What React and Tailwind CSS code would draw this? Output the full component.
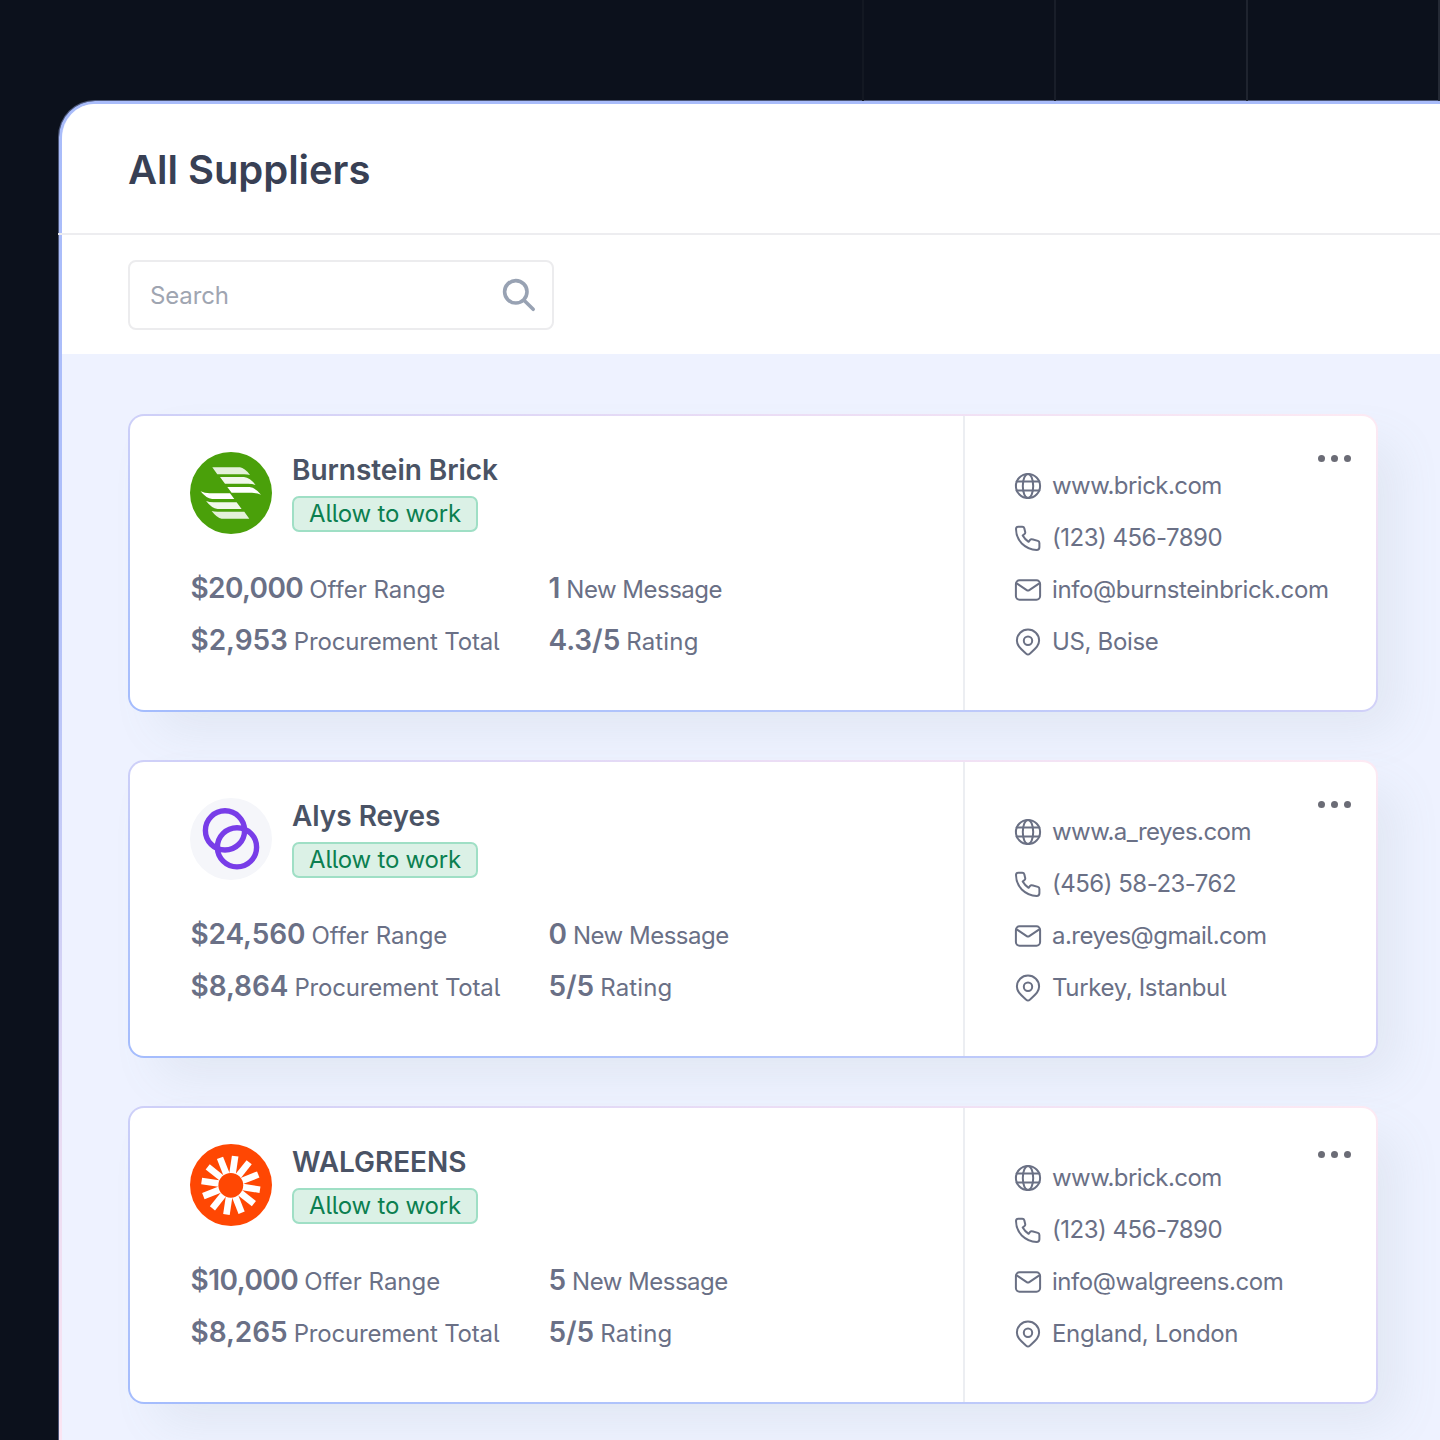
import clsx from "clsx";

const suppliers = [
  {
    name: "Burnstein Brick",
    logo: <BrickLogo />,
    offer: "$20,000",
    total: "$2,953",
    messages: "1",
    rating: "4.3/5",
    site: "www.brick.com",
    phone: "(123) 456-7890",
    email: "info@burnsteinbrick.com",
    place: "US, Boise",
    offerClass: "tracking-[-0.6px]",
    emailClass: "tracking-[-0.38px]",
    menuClass: "mt-[34px]",
  },
  {
    name: "Alys Reyes",
    logo: <RingsLogo />,
    offer: "$24,560",
    total: "$8,864",
    messages: "0",
    rating: "5/5",
    site: "www.a_reyes.com",
    phone: "(456) 58-23-762",
    email: "a.reyes@gmail.com",
    place: "Turkey, Istanbul",
    offerClass: "tracking-[-0.1px]",
    emailClass: "tracking-[-0.52px]",
    menuClass: "mt-[34px]",
  },
  {
    name: "WALGREENS",
    logo: <SunLogo />,
    offer: "$10,000",
    total: "$8,265",
    messages: "5",
    rating: "5/5",
    site: "www.brick.com",
    phone: "(123) 456-7890",
    email: "info@walgreens.com",
    place: "England, London",
    offerClass: "tracking-[-0.5px]",
    emailClass: "tracking-[-0.45px]",
    menuClass: "mt-[38px]",
  },
];

function BrickLogo() {
  const half = (
    <>
      <path d="M22.300 15.300H50Q54.500 15.800 60 22.900Q57.500 22.200 54 22.200H27.300Z" opacity=".85" />
      <path d="M30 25H54Q60 25.600 65.500 32.900Q62.500 31.700 58 31.700H35Z" opacity=".92" />
      <path d="M37.300 35H59.500Q65.500 35.600 71 42.700Q67 40.800 62 40.800H41.600Z" />
    </>
  );
  return (
    <svg width="82" height="82" viewBox="0 0 82 82" fill="#fff">
      <circle cx="41" cy="41" r="41" fill="#4aa00a" />
      {half}
      <g transform="rotate(180 40.8 41)">{half}</g>
    </svg>
  );
}

function RingsLogo() {
  return (
    <svg width="82" height="82" viewBox="0 0 82 82" fill="none" stroke="#783de8" strokeWidth="5.4">
      <circle cx="41" cy="41" r="41" fill="#f5f6fa" stroke="none" />
      <circle cx="35" cy="32.4" r="19.6" />
      <circle cx="47" cy="49.3" r="19.6" />
    </svg>
  );
}

function SunLogo() {
  const rays = Array.from({ length: 12 }, (_, i) => 8.5 + i * 30);
  return (
    <svg width="82" height="82" viewBox="0 0 82 82">
      <circle cx="41" cy="41" r="41" fill="#ff4703" />
      {rays.map((angle) => (
        <rect key={angle} x="37.5" y="11.8" width="6.6" height="19" fill="#fff" transform={`rotate(${angle} 40.8 41.3)`} />
      ))}
      <circle cx="40.8" cy="41.3" r="12.4" fill="#ff4703" />
    </svg>
  );
}

function Icon({ children }) {
  return (
    <svg
      width="28"
      height="28"
      viewBox="0 0 28 28"
      fill="none"
      stroke="#6a7084"
      strokeWidth="2"
      strokeLinecap="round"
      strokeLinejoin="round"
      className="shrink-0"
    >
      {children}
    </svg>
  );
}

function GlobeIcon() {
  return (
    <Icon>
      <circle cx="14" cy="14" r="12.1" />
      <ellipse cx="14" cy="14" rx="5.2" ry="12.1" />
      <path d="M2.6 9.6h22.800M2.600 18.400h22.800" />
    </Icon>
  );
}

function PhoneIcon() {
  return (
    <Icon>
      <path d="M4.300 2.800H8.300Q9.900 2.800 10.300 4.300L11.200 7.900Q11.500 9.200 10.500 10.100L8.700 11.600Q10.700 15.300 14.600 17.800L16.100 15.900Q16.900 14.900 18.200 15.300L23.900 16.900Q25.400 17.400 25.400 18.900V23.200Q25.400 25.900 22.600 25.900Q14.300 25.900 7.800 19.500Q2 13.400 2 5.100Q2 2.800 4.300 2.800Z" />
    </Icon>
  );
}

function MailIcon() {
  return (
    <Icon>
      <rect x="1.9" y="4.300" width="24.200" height="19.400" rx="3.600" />
      <path d="M2.700 7.300L13.100 14.300Q14 14.900 14.900 14.300L25.300 7.300" />
    </Icon>
  );
}

function PinIcon() {
  return (
    <Icon>
      <path d="M14 26.500c-.9 0-1.600-.7-2.300-1.300C7 20.900 2.900 17.800 2.900 12.500a11.100 10.900 0 0 1 22.200 0c0 5.300-4.100 8.400-8.800 12.700-.7.600-1.400 1.300-2.300 1.300Z" />
      <circle cx="14" cy="12.700" r="4.200" />
    </Icon>
  );
}

function Stat({ value, label, valueClass = "tracking-[-0.05px]", labelClass }) {
  return (
    <p className="flex h-[52px] items-baseline whitespace-nowrap text-[24px] leading-[52px] text-[#6a7086]">
      <span className={clsx("mr-[6px] text-[28px] font-semibold", valueClass)}>{value}</span>
      <span className={labelClass}>{label}</span>
    </p>
  );
}

function Contact({ icon, className, children }) {
  return (
    <li className="flex h-[52px] items-center gap-[10px] whitespace-nowrap text-[24px] text-[#6a7086]">
      {icon}
      <span className={className}>{children}</span>
    </li>
  );
}

function SupplierCard({ supplier }) {
  return (
    <article className="flex h-[298px] w-[1250px] rounded-[16px] border-2 border-transparent shadow-[24px_24px_48px_-8px_rgba(125,150,145,0.12)] [background:linear-gradient(#fff,#fff)_padding-box,linear-gradient(14deg,#a4bcfd_0%,#b2c5fb_25%,#cfd0f8_50%,#ebddf5_75%,#fdeaf3_100%)_border-box]">
      <div className="w-[833px] pl-[60px] pt-[36px]">
        <div className="flex gap-[20px]">
          {supplier.logo}
          <div>
            <h2 className="h-[44px] text-[28px] font-semibold leading-[36px] tracking-[-0.04px] text-[#4a5365] [font-feature-settings:normal]">{supplier.name}</h2>
            <span className="flex h-[36px] w-[186px] items-center justify-center rounded-[7px] border-2 border-[#9fdfc5] bg-[#dbf1e6] text-[24px] leading-none tracking-[-0.22px] text-[#0b7f50]">
              Allow to work
            </span>
          </div>
        </div>
        <div className="mt-[28px] grid grid-cols-[358px_1fr] pl-[0.500px]">
          <Stat value={supplier.offer} label="Offer Range" valueClass={supplier.offerClass} labelClass="tracking-[0px]" />
          <Stat value={supplier.messages} label="New Message" labelClass="tracking-[-0.5px]" />
          <Stat value={supplier.total} label="Procurement Total" labelClass="tracking-[-0.18px]" />
          <Stat value={supplier.rating} label="Rating" labelClass="tracking-[0.15px]" />
        </div>
      </div>
      <div className="flex flex-1 border-l-2 border-[#eceef2]">
        <ul className="w-[351px] pl-[49px] pt-[44px]">
          <Contact icon={<GlobeIcon />} className="tracking-[-0.55px]">
            {supplier.site}
          </Contact>
          <Contact icon={<PhoneIcon />} className="tracking-[-0.5px]">
            {supplier.phone}
          </Contact>
          <Contact icon={<MailIcon />} className={supplier.emailClass}>
            {supplier.email}
          </Contact>
          <Contact icon={<PinIcon />} className="tracking-[-0.35px]">
            {supplier.place}
          </Contact>
        </ul>
        <button className={clsx("flex h-4 w-[36px] items-center justify-center gap-[6px]", supplier.menuClass)} aria-label="More">
          <i className="size-[7px] rounded-full bg-[#6b6c76]" />
          <i className="size-[7px] rounded-full bg-[#6b6c76]" />
          <i className="size-[7px] rounded-full bg-[#6b6c76]" />
        </button>
      </div>
    </article>
  );
}

export default function App() {
  return (
    <div className="h-[1440px] w-[1440px] overflow-hidden bg-[#0c111c] font-['Inter',sans-serif] [font-feature-settings:'cv05']">
      {/* Faint column guides behind the window */}
      <div className="flex h-[101px] pl-[862px]">
        <div className="w-[192px] shrink-0 border-l-2 border-[#131822]" />
        <div className="w-[192px] shrink-0 border-l-2 border-[#191e29]" />
        <div className="w-[192px] shrink-0 border-l-2 border-[#1f242f]" />
        <div className="w-[2px] shrink-0 bg-[#252a35]" />
      </div>

      <main className="ml-[59px] h-[1500px] w-[1500px] rounded-tl-[36px] border-[3px] border-transparent shadow-[0_0_0_1px_rgba(140,155,210,0.5)] [background:linear-gradient(#eef2ff,#eef2ff)_padding-box,linear-gradient(180deg,#a9bcfa_0%,#aebffa_30%,#c9cdf6_52%,#eadcf2_70%,#fbe5f2_90%)_border-box]">
        <header className="-ml-[4px] flex h-[131px] items-center rounded-tl-[36px] border-b-2 border-[#ededf0] bg-white bg-clip-content pl-[4px]">
          <h1 className="pl-[66px] pt-[3px] text-[40px] font-semibold tracking-[-0.05px] text-[#384054] [font-feature-settings:normal]">All Suppliers</h1>
        </header>
        <div className="h-[119px] bg-white pl-[66px] pt-[25px]">
          <div className="flex h-[70px] w-[426px] items-center justify-between rounded-[8px] border-2 border-[#ececee] pl-[20px] pr-[16px]">
            <span className="pt-px text-[24px] tracking-[-0.15px] text-[#9fa5b1]">Search</span>
            <svg width="36" height="36" viewBox="0 0 36 36" fill="none" stroke="#98a2b3" strokeWidth="3.6" strokeLinecap="round">
              <circle cx="15.800" cy="14.800" r="11.200" />
              <path d="M24 23.300l9.200 9" />
            </svg>
          </div>
        </div>
        <section className="flex flex-col gap-[48px] pl-[66px] pt-[60px]">
          {suppliers.map((supplier) => (
            <SupplierCard key={supplier.name} supplier={supplier} />
          ))}
        </section>
      </main>
    </div>
  );
}
